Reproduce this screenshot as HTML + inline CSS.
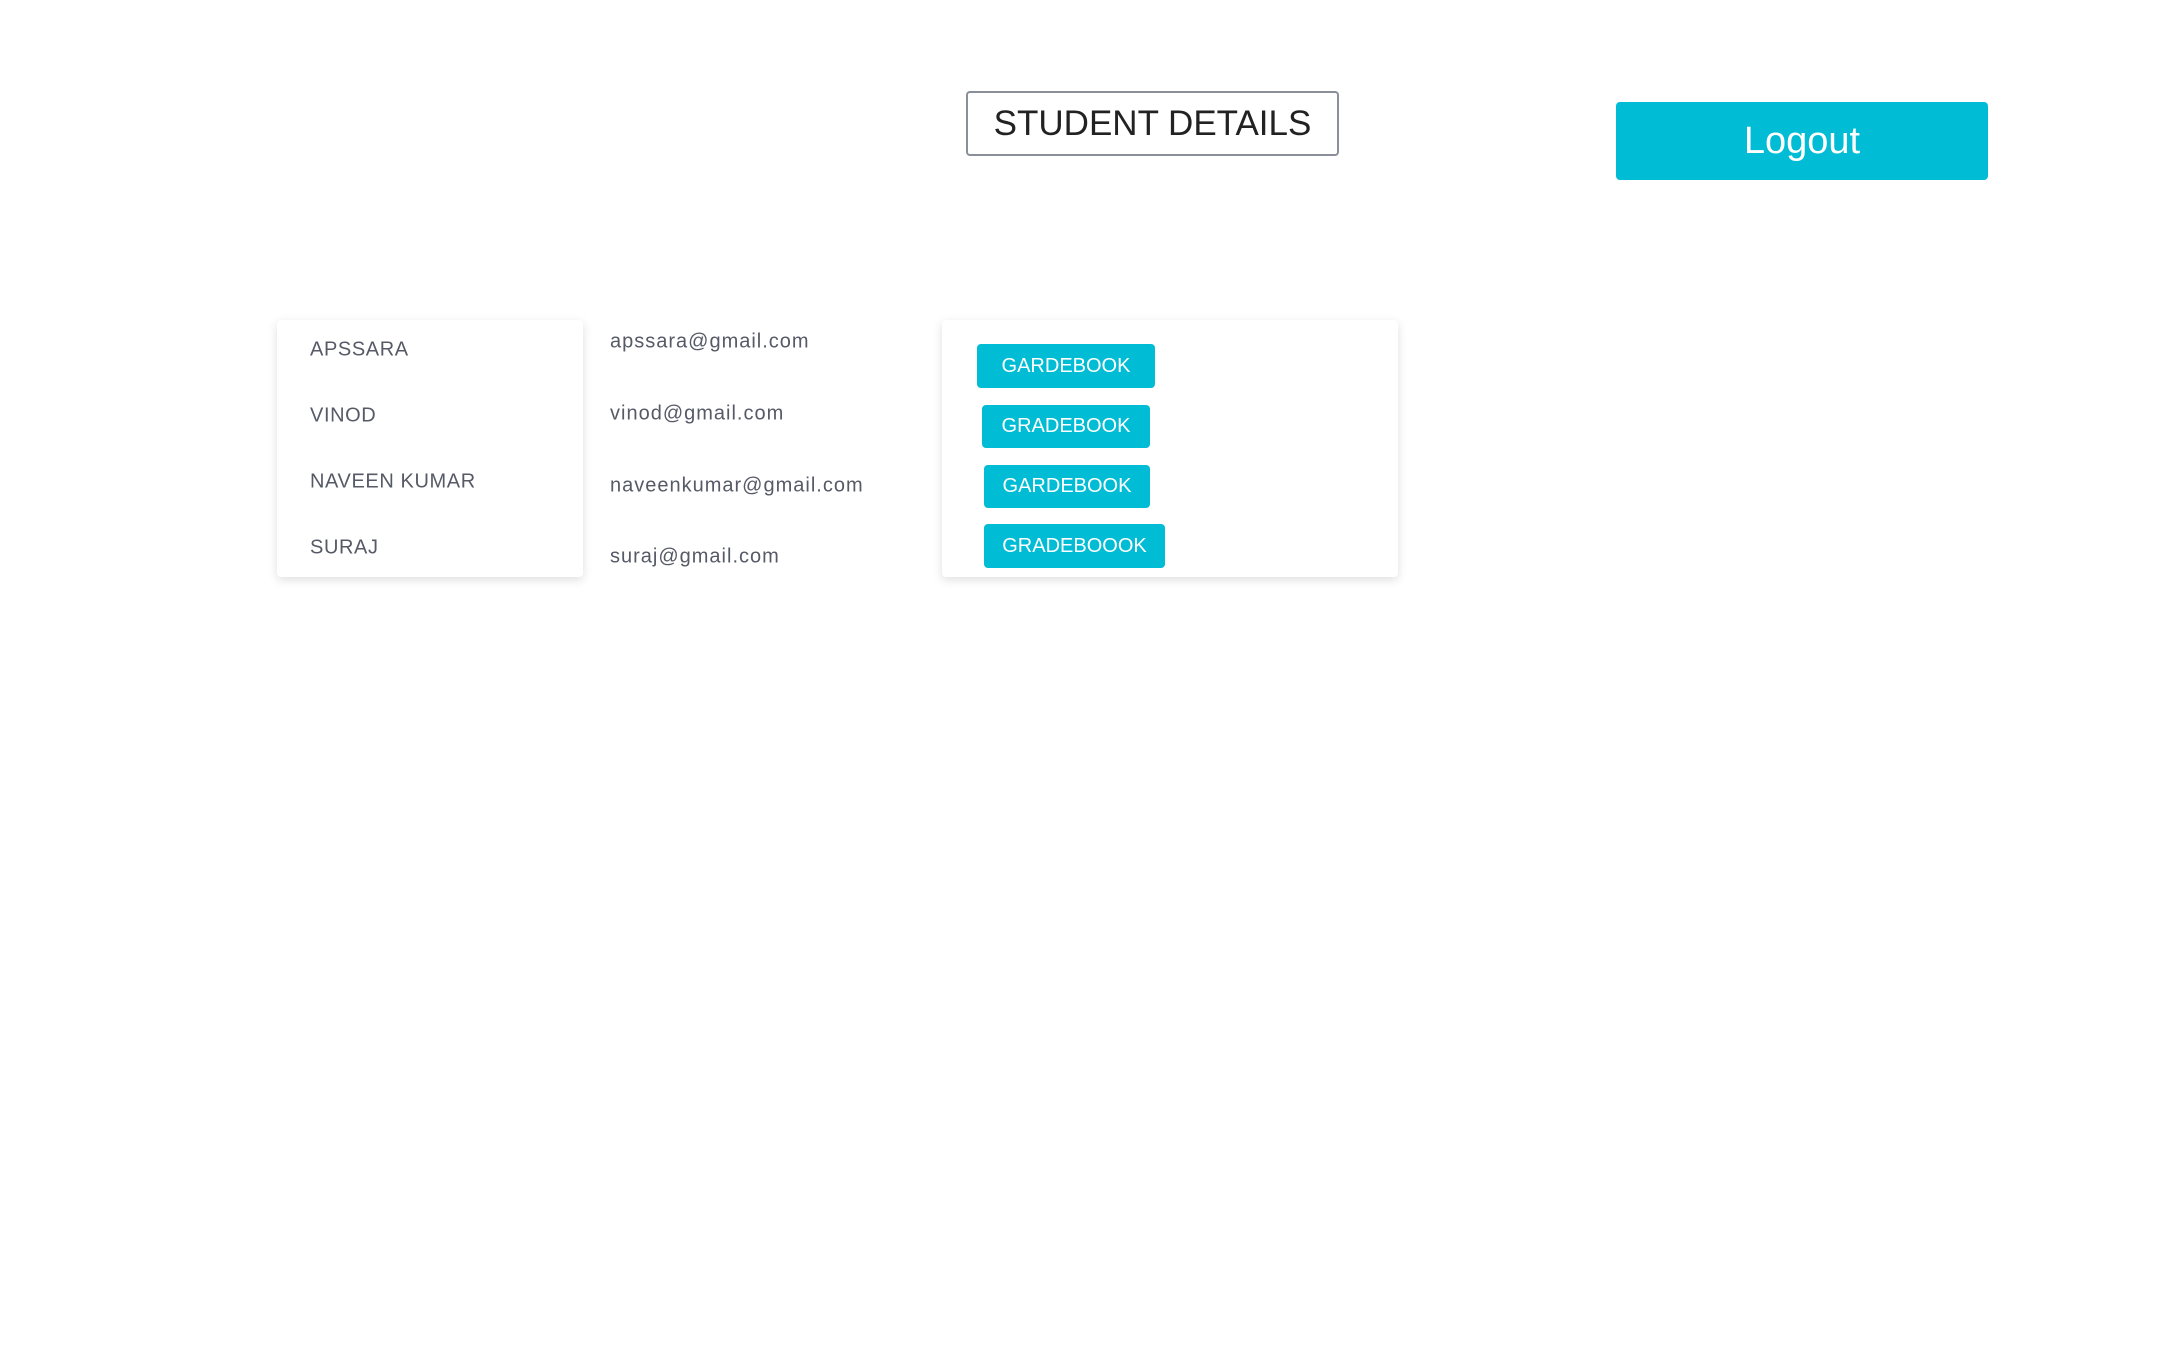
<!DOCTYPE html>
<html><head><meta charset="utf-8"><style>
body{margin:0;width:2160px;height:1350px;background:#fff;font-family:"Liberation Sans",sans-serif;position:relative;overflow:hidden}
.a{position:absolute}
.title{left:966px;top:91px;width:373px;height:65px;border:2px solid #8a8f99;border-radius:4px;box-sizing:border-box;font-size:35px;color:#222;display:flex;align-items:center;justify-content:center}
.logout{left:1616px;top:102px;width:372px;height:78px;background:#00bcd4;border-radius:4px;color:#fff;font-size:38px;display:flex;align-items:center;justify-content:center}
.card{background:#fff;border-radius:4px;box-shadow:0 3px 10px rgba(0,0,0,.13)}
.t{font-size:20px;color:#555a66;transform:translateY(-50%);letter-spacing:0.6px}
.e{letter-spacing:1px}
.b{background:#00bcd4;color:#fff;font-size:20px;border-radius:4px;display:flex;align-items:center;justify-content:center}
</style></head><body>
<div class="a title">STUDENT DETAILS</div>
<div class="a logout">Logout</div>
<div class="a card" style="left:277px;top:320px;width:306px;height:257px"></div>
<div class="a card" style="left:942px;top:320px;width:456px;height:257px"></div>
<div class="a t" style="left:310px;top:350px">APSSARA</div>
<div class="a t" style="left:310px;top:416px">VINOD</div>
<div class="a t" style="left:310px;top:482px">NAVEEN KUMAR</div>
<div class="a t" style="left:310px;top:548px">SURAJ</div>
<div class="a t e" style="left:610px;top:342px">apssara@gmail.com</div>
<div class="a t e" style="left:610px;top:414px">vinod@gmail.com</div>
<div class="a t e" style="left:610px;top:486px">naveenkumar@gmail.com</div>
<div class="a t e" style="left:610px;top:557px">suraj@gmail.com</div>
<div class="a b" style="left:977px;top:344px;width:178px;height:44px">GARDEBOOK</div>
<div class="a b" style="left:982px;top:405px;width:168px;height:43px">GRADEBOOK</div>
<div class="a b" style="left:984px;top:465px;width:166px;height:43px">GARDEBOOK</div>
<div class="a b" style="left:984px;top:524px;width:181px;height:44px">GRADEBOOOK</div>
</body></html>
